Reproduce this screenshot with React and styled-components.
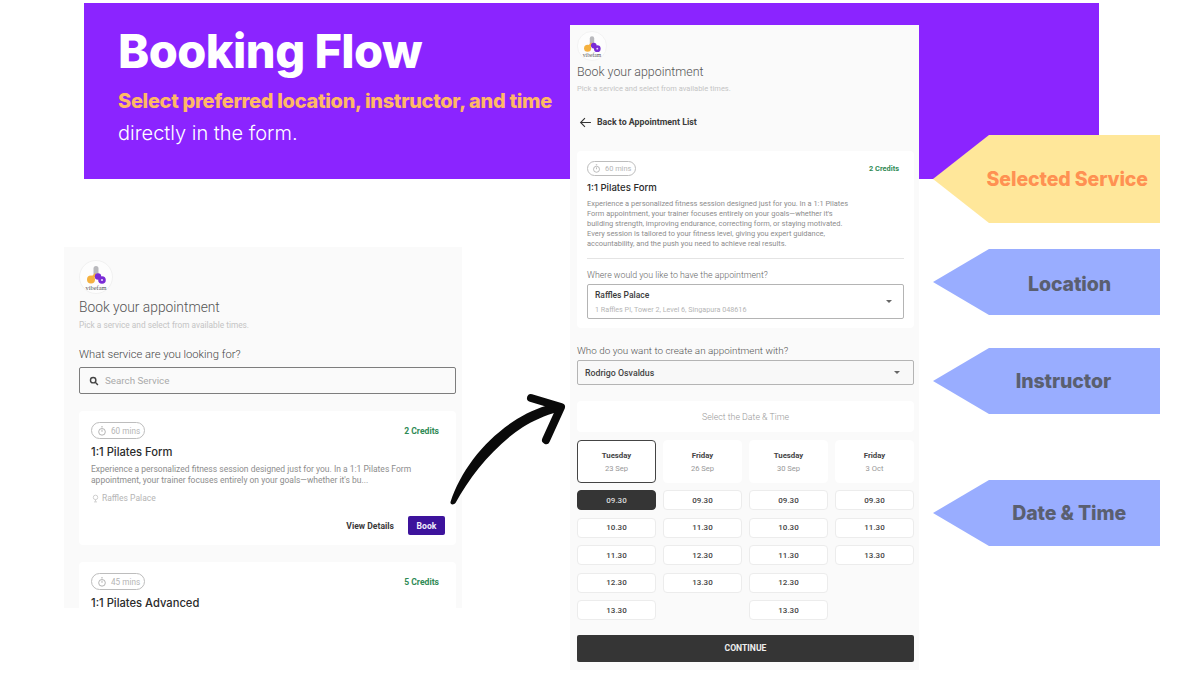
import React from "react";
import styled, { createGlobalStyle } from "styled-components";

const Global = createGlobalStyle`
  html, body { margin: 0; padding: 0; background: #fff; }
  * { box-sizing: border-box; }
`;
const Slide = styled.div`
  position: relative; width: 1200px; height: 675px; overflow: hidden; background: #fff;
  font-family: Roboto, "Liberation Sans", sans-serif;
`;
const Banner = styled.header`
  position: absolute; left: 84px; top: 3px; width: 1015px; height: 176px;
  background: #8b24ff; padding: 20px 0 0 34px; font-family: Inter, "Liberation Sans", sans-serif;
`;
const Headline = styled.h1`
  margin: 0; color: #fff; font-size: 47px; line-height: 56px; font-weight: 800; letter-spacing: -0.55px;
`;
const Tagline = styled.p`
  margin: 8px 0 0; color: #ffb866; font-size: 20px; line-height: 28px; font-weight: 800; letter-spacing: -0.32px;
`;
const TagPlain = styled.p`
  margin: 4px 0 0; color: #fff; font-size: 20px; line-height: 28px; font-weight: 300;
`;
const Panel = styled.section`
  position: absolute; left: ${p => p.$x}px; top: ${p => p.$y}px; width: ${p => p.$w}px; height: ${p => p.$h}px;
  background: #fafafa; overflow: hidden; padding: ${p => p.$pad};
`;
const LogoWrap = styled.div`
  width: ${p => p.$s}px; height: ${p => p.$s}px; display: block;
`;
const Title = styled.h2`
  margin: ${p => p.$mt}px 0 0; font-size: ${p => p.$fs}px; line-height: 18px; font-weight: 300; color: #555;
`;
const Sub = styled.p`
  margin: ${p => p.$mt ?? 4}px 0 0; font-size: ${p => p.$fs}px; line-height: 11px; color: #c4c4c4;
`;
const Question = styled.p`
  margin: ${p => p.$mt}px 0 0; font-size: ${p => p.$fs ?? 12}px; line-height: 14px; font-weight: 300; color: ${p => p.$c ?? "#444"};
`;
const SearchBox = styled.div`
  margin-top: 5px; height: 27px; width: 377px; border: 1px solid #7d7d7d; border-radius: 2px; background: #fafafa;
  display: flex; align-items: center; gap: 6px; padding-left: 9px; font-size: 9.8px; color: #aaa;
`;
const Card = styled.article`
  background: #fff; border-radius: 4px; width: ${p => p.$w}px; height: ${p => p.$h}px;
  margin-top: ${p => p.$mt}px; padding: ${p => p.$pad};
`;
const CardTop = styled.div`
  display: flex; justify-content: space-between; align-items: center;
  padding-right: ${p => p.$pr ?? 0}px;
`;
const Pill = styled.span`
  display: inline-flex; align-items: center; gap: ${p => p.$gap}px;
  height: ${p => p.$h}px; width: ${p => p.$w}px; padding-left: ${p => p.$pl}px;
  border: 1px solid #bdbdbd; border-radius: 9px; color: #b5b5b5; font-size: ${p => p.$fs}px; white-space: nowrap;
`;
const Credits = styled.span`
  color: #2f8a55; font-size: ${p => p.$fs}px; font-weight: 700;
`;
const CardTitle = styled.h3`
  margin: ${p => p.$mt}px 0 0; font-size: ${p => p.$fs}px; line-height: 14px; font-weight: 500; color: #2b2b2b;
  font-family: Inter, Roboto, sans-serif;
`;
const Body = styled.p`
  margin: ${p => p.$mt}px 0 0; font-size: ${p => p.$fs}px; line-height: ${p => p.$lh}px; color: #8d8d8d;
`;
const Line = styled.span`display: block; white-space: nowrap;`;
const Place = styled.div`
  margin-top: 7px; display: flex; align-items: center; gap: 2px; font-size: 8.5px; color: #b5b5b5; line-height: 11px;
`;
const Actions = styled.div`
  margin-top: 12px; display: flex; justify-content: flex-end; align-items: center; gap: 14px;
`;
const TextBtn = styled.span`font-size: 8.6px; font-weight: 700; color: #3a3a3a;`;
const BookBtn = styled.span`
  width: 37px; height: 19px; display: flex; align-items: center; justify-content: center;
  background: #3d139c; color: #f2eefc; border-radius: 2px; font-size: 8.6px; font-weight: 700;
`;
const Back = styled.div`
  margin-top: 21px; display: flex; align-items: center; gap: 5px; padding-left: 2px;
  font-size: 8.8px; font-weight: 700; color: #3a3a3a; height: 14px;
`;
const Divider = styled.hr`
  margin: 9px 0 0; border: 0; border-top: 1px solid #e4e4e4;
`;
const Select = styled.div`
  display: flex; align-items: center; justify-content: space-between; width: 100%;
  height: ${p => p.$h}px; margin-top: ${p => p.$mt}px; padding: 0 ${p => p.$pr}px 0 7px;
  border: 1px solid #b4b4b4; border-radius: 2px; background: ${p => p.$bg ?? "#fff"};
`;
const PlaceName = styled.div`font-size: 8.5px; line-height: 11px; font-weight: 500; color: #3a3a3a;`;
const PlaceAddr = styled.div`font-size: 7.2px; line-height: 9px; margin-top: 4px; color: #b5b5b5;`;
const Who = styled.span`font-size: 8.8px; font-weight: 500; color: #444;`;
const Caret = styled.span`
  width: 0; height: 0; border-left: 3.5px solid transparent; border-right: 3.5px solid transparent; border-top: 3.5px solid #666;
`;
const DateHead = styled.div`
  margin-top: 16px; height: 31px; background: #fff; border-radius: 4px;
  display: flex; align-items: center; justify-content: center; font-size: 8.8px; font-weight: 300; color: #999;
`;
const Grid = styled.div`
  display: grid; grid-template-columns: repeat(4, 79px); column-gap: 7px; margin-top: 8px;
`;
const Col = styled.div`display: flex; flex-direction: column;`;
const Day = styled.div`
  height: 43px; margin-bottom: 7px; border-radius: 4px; background: #fff;
  border: 1px solid ${p => p.$on ? "#444" : "#fff"};
  display: flex; flex-direction: column; align-items: center; justify-content: center; gap: 4px;
`;
const DayName = styled.span`font-size: 7.8px; line-height: 9px; font-weight: 700; color: #444;`;
const DayDate = styled.span`font-size: 7.6px; line-height: 9px; color: #999;`;
const Slot = styled.div`
  height: 20px; margin-bottom: 7.5px; border-radius: 4px;
  background: ${p => p.$on ? "#353535" : "#fff"};
  border: 1px solid ${p => p.$on ? "#353535" : "#ececec"};
  color: ${p => p.$on ? "#ddd" : "#444"}; font-size: 8px; font-weight: 500;
  display: flex; align-items: center; justify-content: center;
`;
const Continue = styled.div`
  height: 27px; margin-top: 7px; background: #353535; border-radius: 2px; color: #eee;
  display: flex; align-items: center; justify-content: center; font-size: 8.6px; font-weight: 700;
`;
const Tag = styled.div`
  position: absolute; left: 933px; top: ${p => p.$y}px; width: 227px; height: ${p => p.$h}px;
  background: ${p => p.$bg}; color: ${p => p.$c};
  clip-path: polygon(0 50%, 56px 0, 100% 0, 100% 100%, 56px 100%);
  display: flex; align-items: center; justify-content: flex-end;
  padding: ${p => p.$pt ?? 0}px ${p => p.$pr}px 0 0;
  font-family: Inter, "Liberation Sans", sans-serif; font-size: 19.5px; font-weight: 800; letter-spacing: -0.1px;
`;
const FlowArrow = styled.svg`
  position: absolute; left: 440px; top: 385px; width: 140px; height: 130px;
`;

const Logo = ({ s }) => (
  <LogoWrap $s={s}>
    <svg viewBox="0 0 34 34" width={s} height={s}>
      <circle cx="17" cy="17" r="16.5" fill="#fdfdfd" stroke="#f1f1f1" />
      <rect x="14.5" y="6" width="5" height="11" rx="2.5" fill="#b9b9bd" />
      <circle cx="12" cy="19.5" r="4" fill="#f5b13f" />
      <path d="M11 20 L17 14" stroke="#f5b13f" strokeWidth="2.5" />
      <circle cx="19" cy="16.5" r="3.2" fill="#7a2bd6" />
      <circle cx="23" cy="20" r="3.8" fill="#7a2bd6" />
      <circle cx="23" cy="20" r="1.1" fill="#e9d8fb" />
      <text x="17" y="29.5" textAnchor="middle" fontFamily="Liberation Serif, serif" fontSize="6.4" fill="#555">vibefam</text>
    </svg>
  </LogoWrap>
);
const Timer = ({ s }) => (
  <svg viewBox="0 0 24 24" width={s} height={s} fill="none" stroke="#a5a5a5" strokeWidth="2">
    <circle cx="12" cy="14" r="8" /><path d="M10 2h4M12 14V9" />
  </svg>
);
const Pin = () => (
  <svg viewBox="0 0 24 24" width="9" height="9" fill="none" stroke="#c0c0c0" strokeWidth="2">
    <circle cx="12" cy="9" r="6" /><path d="M12 15v5M8 21h8" />
  </svg>
);
const Mag = () => (
  <svg viewBox="0 0 24 24" width="10" height="10" fill="none" stroke="#444" strokeWidth="3.4">
    <circle cx="10" cy="10" r="6.5" /><path d="M15 15l6.5 6.5" />
  </svg>
);
const BackArrow = () => (
  <svg viewBox="0 0 24 24" width="13" height="13" fill="none" stroke="#333" strokeWidth="2">
    <path d="M22 12H3M11 4l-8 8 8 8" />
  </svg>
);

const days = [
  { n: "Tuesday", d: "23 Sep", on: true, t: ["09.30", "10.30", "11.30", "12.30", "13.30"] },
  { n: "Friday", d: "26 Sep", t: ["09.30", "11.30", "12.30", "13.30"] },
  { n: "Tuesday", d: "30 Sep", t: ["09.30", "10.30", "11.30", "12.30", "13.30"] },
  { n: "Friday", d: "3 Oct", t: ["09.30", "11.30", "13.30"] },
];

export default function App() {
  return (
    <Slide>
      <Global />
      <Banner>
        <Headline>Booking Flow</Headline>
        <Tagline>Select preferred location, instructor, and time</Tagline>
        <TagPlain>directly in the form.</TagPlain>
      </Banner>

      <Panel $x={64} $y={247} $w={398} $h={361} $pad="13px 0 0 15px">
        <Logo s={34} />
        <Title $mt={4} $fs={13.8}>Book your appointment</Title>
        <Sub $fs={8.3}>Pick a service and select from available times.</Sub>
        <Question $mt={17} $fs={11.2}>What service are you looking for?</Question>
        <SearchBox><Mag />Search Service</SearchBox>
        <Card $w={377} $h={134} $mt={17} $pad="11px 11px 0 12px">
          <CardTop $pr={6}>
            <Pill $w={54} $h={17} $pl={5} $gap={4} $fs={8.2}><Timer s={10} />60 mins</Pill>
            <Credits $fs={8.6}>2 Credits</Credits>
          </CardTop>
          <CardTitle $mt={6} $fs={11.2}>1:1 Pilates Form</CardTitle>
          <Body $mt={5} $fs={8.5} $lh={11}>
            <Line>Experience a personalized fitness session designed just for you. In a 1:1 Pilates Form</Line>
            <Line>appointment, your trainer focuses entirely on your goals—whether it's bu...</Line>
          </Body>
          <Place><Pin />Raffles Palace</Place>
          <Actions><TextBtn>View Details</TextBtn><BookBtn>Book</BookBtn></Actions>
        </Card>
        <Card $w={377} $h={134} $mt={17} $pad="11px 11px 0 12px">
          <CardTop $pr={6}>
            <Pill $w={54} $h={17} $pl={5} $gap={4} $fs={8.2}><Timer s={10} />45 mins</Pill>
            <Credits $fs={8.6}>5 Credits</Credits>
          </CardTop>
          <CardTitle $mt={6} $fs={11.2}>1:1 Pilates Advanced</CardTitle>
        </Card>
      </Panel>

      <Panel $x={570} $y={25} $w={349} $h={645} $pad="6px 5px 0 7px">
        <Logo s={30} />
        <Title $mt={2} $fs={12.4}>Book your appointment</Title>
        <Sub $mt={2} $fs={7.5}>Pick a service and select from available times.</Sub>
        <Back><BackArrow />Back to Appointment List</Back>
        <Card $w={337} $h={177} $mt={22} $pad="10px 10px 0 10px">
          <CardTop $pr={5}>
            <Pill $w={49} $h={15} $pl={4} $gap={4} $fs={7.4}><Timer s={9} />60 mins</Pill>
            <Credits $fs={7.4}>2 Credits</Credits>
          </CardTop>
          <CardTitle $mt={5} $fs={9.6}>1:1 Pilates Form</CardTitle>
          <Body $mt={4} $fs={7.45} $lh={10}>
            <Line>Experience a personalized fitness session designed just for you. In a 1:1 Pilates</Line>
            <Line>Form appointment, your trainer focuses entirely on your goals—whether it's</Line>
            <Line>building strength, improving endurance, correcting form, or staying motivated.</Line>
            <Line>Every session is tailored to your fitness level, giving you expert guidance,</Line>
            <Line>accountability, and the push you need to achieve real results.</Line>
          </Body>
          <Divider />
          <Question $mt={9} $fs={8.8} $c="#666">Where would you like to have the appointment?</Question>
          <Select $h={35} $mt={2} $pr={11}>
            <div><PlaceName>Raffles Palace</PlaceName><PlaceAddr>1 Raffles Pl, Tower 2, Level 6, Singapura 048616</PlaceAddr></div>
            <Caret />
          </Select>
        </Card>
        <Question $mt={16} $fs={9.9} $c="#555">Who do you want to create an appointment with?</Question>
        <Select $h={25} $mt={2} $pr={13} $bg="#f8f8f8"><Who>Rodrigo Osvaldus</Who><Caret /></Select>
        <DateHead>Select the Date &amp; Time</DateHead>
        <Grid>
          {days.map((c, i) => (
            <Col key={i}>
              <Day $on={c.on}><DayName>{c.n}</DayName><DayDate>{c.d}</DayDate></Day>
              {c.t.map((x, j) => <Slot key={j} $on={c.on && j === 0}>{x}</Slot>)}
            </Col>
          ))}
        </Grid>
        <Continue>CONTINUE</Continue>
      </Panel>

      <FlowArrow viewBox="440 385 140 130">
        <path d="M450.5 502 C461 470 485 439 517 419 C530 411 543 406 556 403 L558 412 C545 415 533 421 523 427 C495 445 470 476 455.5 503 C454 505 450 505 450.5 502 Z" fill="#0a0a0a" />
        <path d="M531 398 L561 407 L546 440" fill="none" stroke="#0a0a0a" strokeWidth="8" strokeLinecap="round" strokeLinejoin="round" />
      </FlowArrow>

      <Tag $y={135} $h={88} $bg="#ffe79a" $c="#ff9152" $pr={12}>Selected Service</Tag>
      <Tag $y={249} $h={66} $bg="#99adff" $c="#5a5f70" $pr={49} $pt={4}>Location</Tag>
      <Tag $y={348} $h={66} $bg="#99adff" $c="#5a5f70" $pr={49}>Instructor</Tag>
      <Tag $y={480} $h={66} $bg="#99adff" $c="#5a5f70" $pr={34}>Date &amp; Time</Tag>
    </Slide>
  );
}
